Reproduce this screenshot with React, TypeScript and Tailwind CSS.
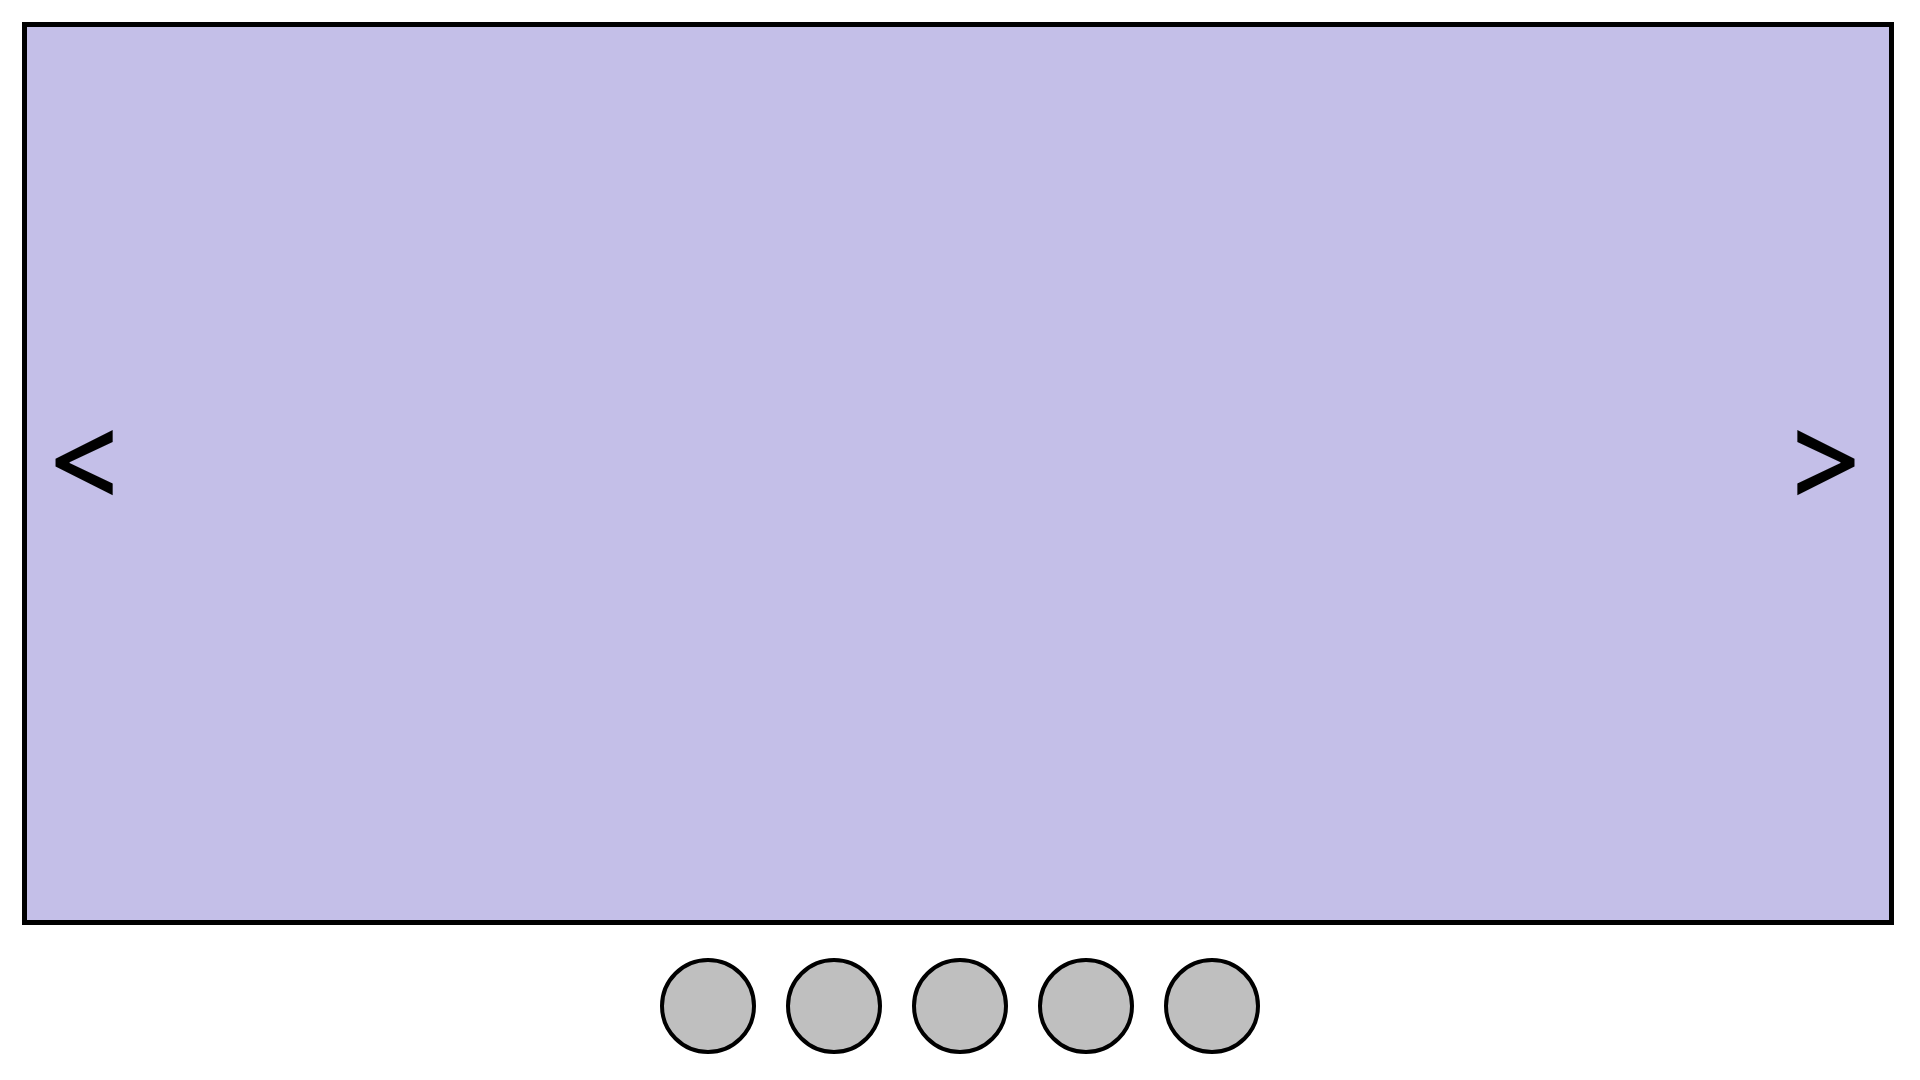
const slides = [0, 1, 2, 3, 4]

export default function App() {
  return (
    <div className="min-h-screen bg-white pt-[22px] font-['Inter',sans-serif]">
      <div className="ml-[22px] flex h-[903px] w-[1872px] items-center justify-between border-[5px] border-black bg-[#c4bfe8] pr-[24px] pl-[18px]">
        <button className="mb-[42px] text-[124px] leading-none text-black">&lt;</button>
        <button className="mb-[42px] text-[124px] leading-none text-black">&gt;</button>
      </div>
      <div className="mt-[33px] flex justify-center gap-[30px]">
        {slides.map((i) => (
          <button key={i} className="h-[96px] w-[96px] rounded-full border-4 border-black bg-[#bfbfbf]" />
        ))}
      </div>
    </div>
  )
}
